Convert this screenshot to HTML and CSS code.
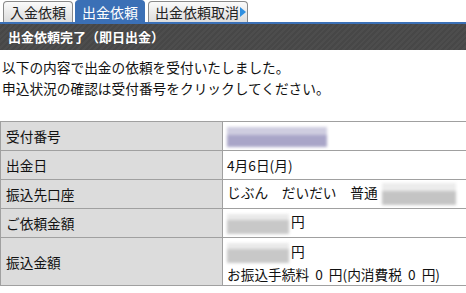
FILE: index.html
```html
<!DOCTYPE html>
<html lang="ja">
<head>
    <meta charset="UTF-8">
    <title>出金依頼完了</title>
    <link rel="stylesheet" href="styles.css">
</head>
<body>
    <div class="tabs">
        <div class="tab">入金依頼</div>
        <div class="tab active">出金依頼</div>
        <div class="tab more">出金依頼取消<span class="arrow"></span></div>
    </div>
    <div class="title-bar">出金依頼完了（即日出金）</div>

    <div class="message">
        <p>以下の内容で出金の依頼を受付いたしました。</p>
        <p>申込状況の確認は受付番号をクリックしてください。</p>
    </div>

    <table class="detail">
        <tr class="row-id">
            <th>受付番号</th>
            <td><span class="mask mask-id"></span></td>
        </tr>
        <tr>
            <th>出金日</th>
            <td>4月6日(月)</td>
        </tr>
        <tr>
            <th>振込先口座</th>
            <td>じぶん　だいだい　普通<span class="mask mask-acct"></span></td>
        </tr>
        <tr class="row-amount">
            <th>ご依頼金額</th>
            <td><span class="mask mask-yen"></span>円</td>
        </tr>
        <tr class="row-transfer">
            <th>振込金額</th>
            <td>
                <div><span class="mask mask-yen"></span>円</div>
                <div class="fee">お振込手続料 0 円(内消費税 0 円)</div>
            </td>
        </tr>
    </table>
</body>
</html>
```

FILE: styles.css
```css
* {
    margin: 0;
    padding: 0;
    box-sizing: border-box;
}

body {
    font-family: "Noto Sans CJK JP", "Noto Sans", sans-serif;
    font-size: 13.7px;
    color: #111;
    background: #fff;
    overflow: hidden;
    width: 466px;
}

.tabs {
    display: flex;
    align-items: flex-end;
    height: 22px;
    padding-left: 3px;
    gap: 2px;
}

.tab {
    height: 21px;
    padding: 0 6px;
    border: 1px solid #8a8a8a;
    border-bottom: none;
    border-radius: 4px 4px 0 0;
    background: linear-gradient(#fafafa, #dcdcdc);
    font-size: 14px;
    line-height: 20px;
    color: #222;
    display: flex;
    align-items: center;
}

.tab.active {
    height: 22px;
    background: #3b70b6;
    border-color: #3b70b6;
    color: #fff;
}

.tab.more {
    margin-left: 1px;
    padding-right: 1px;
}

.arrow {
    width: 0;
    height: 0;
    margin-left: 1px;
    border-top: 5px solid transparent;
    border-bottom: 5px solid transparent;
    border-left: 6px solid #2f8fe0;
}

.title-bar {
    height: 28px;
    border-top: 2px solid #3b70b6;
    background: repeating-linear-gradient(135deg, #4d4d4d 0, #4d4d4d 2px, #474747 2px, #474747 4px);
    color: #fff;
    font-size: 13px;
    font-weight: bold;
    line-height: 26px;
    padding-left: 8px;
}

.message {
    padding: 7px 0 0 2px;
    line-height: 21px;
}

.detail {
    margin-top: 22px;
    width: 480px;
    border-collapse: collapse;
    line-height: 18px;
}

.detail th,
.detail td {
    border: 1px solid #a0a0a0;
    text-align: left;
    vertical-align: middle;
    font-weight: normal;
}

.detail th {
    width: 222px;
    background: #dcdcdc;
    padding: 0 5px;
}

.detail td {
    padding: 0 4px;
}

.detail tr {
    height: 29px;
}

.row-id {
    height: 30px;
}

.row-amount {
    height: 30px;
}

.row-transfer {
    height: 49px;
}

.row-transfer td {
    padding-top: 2px;
    line-height: 22px;
}

.fee {
    word-spacing: 3px;
}

.mask {
    display: inline-block;
    vertical-align: middle;
    filter: blur(1.5px);
}

.mask-id {
    width: 100px;
    height: 20px;
    background: linear-gradient(#cfcde0 0 40%, #a9a5c8 40% 100%);
}

.mask-acct {
    width: 74px;
    height: 22px;
    margin-left: 4px;
    background: linear-gradient(#ececec 0 35%, #c4c4c4 35% 100%);
}

.mask-yen {
    width: 62px;
    height: 20px;
    margin-right: 2px;
    background: linear-gradient(#eaeaea 0 30%, #c8c8c8 30% 100%);
}
```
